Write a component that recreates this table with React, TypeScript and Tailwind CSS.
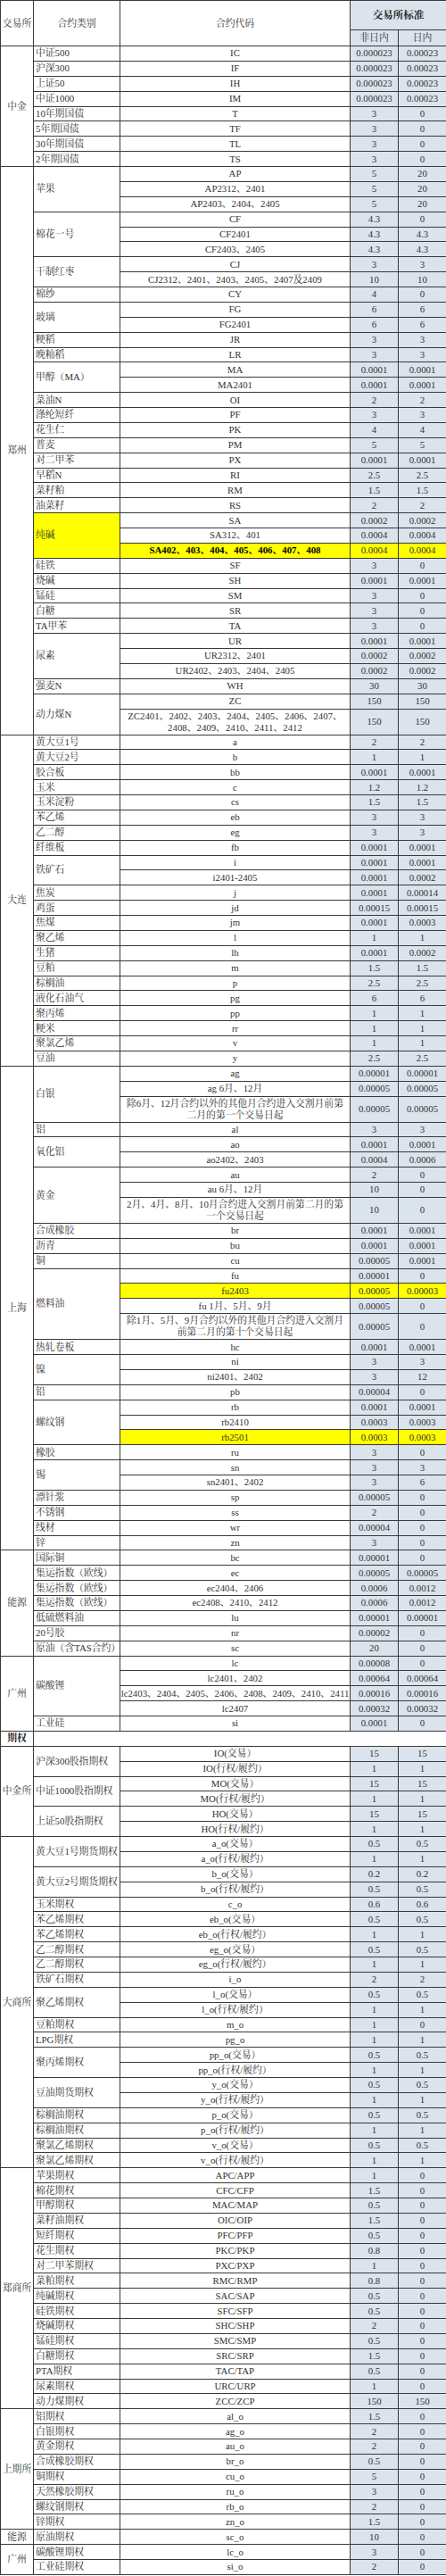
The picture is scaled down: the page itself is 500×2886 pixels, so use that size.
type Row = { code: string; a: string; b: string; hl?: boolean; bold?: boolean; tall?: boolean }
type Item = { name: string; hl?: boolean; rows: Row[] }
type Group = { ex: string; items: Item[] }

const r = (code: string, a: string, b: string, extra: Partial<Row> = {}): Row => ({ code, a, b, ...extra })
const s = (name: string, code: string, a: string, b: string): Item => ({ name, rows: [r(code, a, b)] })

const futures: Group[] = [
  {
    ex: "中金",
    items: [
      s("中证500", "IC", "0.000023", "0.00023"),
      s("沪深300", "IF", "0.000023", "0.00023"),
      s("上证50", "IH", "0.000023", "0.00023"),
      s("中证1000", "IM", "0.000023", "0.00023"),
      s("10年期国债", "T", "3", "0"),
      s("5年期国债", "TF", "3", "0"),
      s("30年期国债", "TL", "3", "0"),
      s("2年期国债", "TS", "3", "0"),
    ],
  },
  {
    ex: "郑州",
    items: [
      { name: "苹果", rows: [r("AP", "5", "20"), r("AP2312、2401", "5", "20"), r("AP2403、2404、2405", "5", "20")] },
      { name: "棉花一号", rows: [r("CF", "4.3", "0"), r("CF2401", "4.3", "4.3"), r("CF2403、2405", "4.3", "4.3")] },
      { name: "干制红枣", rows: [r("CJ", "3", "3"), r("CJ2312、2401、2403、2405、2407及2409", "10", "10")] },
      s("棉纱", "CY", "4", "0"),
      { name: "玻璃", rows: [r("FG", "6", "6"), r("FG2401", "6", "6")] },
      s("粳稻", "JR", "3", "3"),
      s("晚籼稻", "LR", "3", "3"),
      { name: "甲醇（MA）", rows: [r("MA", "0.0001", "0.0001"), r("MA2401", "0.0001", "0.0001")] },
      s("菜油N", "OI", "2", "2"),
      s("涤纶短纤", "PF", "3", "3"),
      s("花生仁", "PK", "4", "4"),
      s("普麦", "PM", "5", "5"),
      s("对二甲苯", "PX", "0.0001", "0.0001"),
      s("早稻N", "RI", "2.5", "2.5"),
      s("菜籽粕", "RM", "1.5", "1.5"),
      s("油菜籽", "RS", "2", "2"),
      {
        name: "纯碱",
        hl: true,
        rows: [
          r("SA", "0.0002", "0.0002"),
          r("SA312、401", "0.0004", "0.0004"),
          r("SA402、403、404、405、406、407、408", "0.0004", "0.0004", { hl: true, bold: true }),
        ],
      },
      s("硅铁", "SF", "3", "0"),
      s("烧碱", "SH", "0.0001", "0.0001"),
      s("锰硅", "SM", "3", "0"),
      s("白糖", "SR", "3", "0"),
      s("TA甲苯", "TA", "3", "0"),
      {
        name: "尿素",
        rows: [r("UR", "0.0001", "0.0001"), r("UR2312、2401", "0.0002", "0.0002"), r("UR2402、2403、2404、2405", "0.0002", "0.0002")],
      },
      s("强麦N", "WH", "30", "30"),
      {
        name: "动力煤N",
        rows: [
          r("ZC", "150", "150"),
          r("ZC2401、2402、2403、2404、2405、2406、2407、\n2408、2409、2410、2411、2412", "150", "150", { tall: true }),
        ],
      },
    ],
  },
  {
    ex: "大连",
    items: [
      s("黄大豆1号", "a", "2", "2"),
      s("黄大豆2号", "b", "1", "1"),
      s("胶合板", "bb", "0.0001", "0.0001"),
      s("玉米", "c", "1.2", "1.2"),
      s("玉米淀粉", "cs", "1.5", "1.5"),
      s("苯乙烯", "eb", "3", "3"),
      s("乙二醇", "eg", "3", "3"),
      s("纤维板", "fb", "0.0001", "0.0001"),
      { name: "铁矿石", rows: [r("i", "0.0001", "0.0001"), r("i2401-2405", "0.0001", "0.0002")] },
      s("焦炭", "j", "0.0001", "0.00014"),
      s("鸡蛋", "jd", "0.00015", "0.00015"),
      s("焦煤", "jm", "0.0001", "0.0003"),
      s("聚乙烯", "l", "1", "1"),
      s("生猪", "lh", "0.0001", "0.0002"),
      s("豆粕", "m", "1.5", "1.5"),
      s("棕榈油", "p", "2.5", "2.5"),
      s("液化石油气", "pg", "6", "6"),
      s("聚丙烯", "pp", "1", "1"),
      s("粳米", "rr", "1", "1"),
      s("聚氯乙烯", "v", "1", "1"),
      s("豆油", "y", "2.5", "2.5"),
    ],
  },
  {
    ex: "上海",
    items: [
      {
        name: "白银",
        rows: [
          r("ag", "0.00001", "0.00001"),
          r("ag 6月、12月", "0.00005", "0.00005"),
          r("除6月、12月合约以外的其他月合约进入交割月前第\n二月的第一个交易日起", "0.00005", "0.00005", { tall: true }),
        ],
      },
      s("铝", "al", "3", "3"),
      { name: "氧化铝", rows: [r("ao", "0.0001", "0.0001"), r("ao2402、2403", "0.0004", "0.0006")] },
      {
        name: "黄金",
        rows: [
          r("au", "2", "0"),
          r("au 6月、12月", "10", "0"),
          r("2月、4月、8月、10月合约进入交割月前第二月的第\n一个交易日起", "10", "0", { tall: true }),
        ],
      },
      s("合成橡胶", "br", "0.0001", "0.0001"),
      s("沥青", "bu", "0.0001", "0.0001"),
      s("铜", "cu", "0.00005", "0.0001"),
      {
        name: "燃料油",
        rows: [
          r("fu", "0.00001", "0"),
          r("fu2403", "0.00005", "0.00003", { hl: true }),
          r("fu 1月、5月、9月", "0.00005", "0"),
          r("除1月、5月、9月合约以外的其他月合约进入交割月\n前第二月的第十个交易日起", "0.00005", "0", { tall: true }),
        ],
      },
      s("热轧卷板", "hc", "0.0001", "0.0001"),
      { name: "镍", rows: [r("ni", "3", "3"), r("ni2401、2402", "3", "12")] },
      s("铅", "pb", "0.00004", "0"),
      {
        name: "螺纹钢",
        rows: [r("rb", "0.0001", "0.0001"), r("rb2410", "0.0003", "0.0003"), r("rb2501", "0.0003", "0.0003", { hl: true })],
      },
      s("橡胶", "ru", "3", "0"),
      { name: "锡", rows: [r("sn", "3", "3"), r("sn2401、2402", "3", "6")] },
      s("漂针浆", "sp", "0.00005", "0"),
      s("不锈钢", "ss", "2", "0"),
      s("线材", "wr", "0.00004", "0"),
      s("锌", "zn", "3", "0"),
    ],
  },
  {
    ex: "能源",
    items: [
      s("国际铜", "bc", "0.00001", "0"),
      s("集运指数（欧线）", "ec", "0.00005", "0.00005"),
      s("集运指数（欧线）", "ec2404、2406", "0.0006", "0.0012"),
      s("集运指数（欧线）", "ec2408、2410、2412", "0.0006", "0.0012"),
      s("低硫燃料油", "lu", "0.00001", "0.00001"),
      s("20号胶", "nr", "0.00002", "0"),
      s("原油（含TAS合约）", "sc", "20", "0"),
    ],
  },
  {
    ex: "广州",
    items: [
      {
        name: "碳酸锂",
        rows: [
          r("lc", "0.00008", "0"),
          r("lc2401、2402", "0.00064", "0.00064"),
          r("lc2403、2404、2405、2406、2408、2409、2410、2411", "0.00016", "0.00016"),
          r("lc2407", "0.00032", "0.00032"),
        ],
      },
      s("工业硅", "si", "0.0001", "0"),
    ],
  },
]

const pair = (name: string, c: string, a1: string, b1: string, a2: string, b2: string): Item => ({
  name,
  rows: [r(`${c}(交易）`, a1, b1), r(`${c}(行权/履约）`, a2, b2)],
})

const options: Group[] = [
  {
    ex: "中金所",
    items: [
      pair("沪深300股指期权", "IO", "15", "15", "1", "1"),
      pair("中证1000股指期权", "MO", "15", "15", "1", "1"),
      pair("上证50股指期权", "HO", "15", "15", "1", "1"),
    ],
  },
  {
    ex: "大商所",
    items: [
      pair("黄大豆1号期货期权", "a_o", "0.5", "0.5", "1", "1"),
      pair("黄大豆2号期货期权", "b_o", "0.2", "0.2", "0.5", "0.5"),
      s("玉米期权", "c_o", "0.6", "0.6"),
      s("苯乙烯期权", "eb_o(交易）", "0.5", "0.5"),
      s("苯乙烯期权", "eb_o(行权/履约）", "1", "1"),
      s("乙二醇期权", "eg_o(交易）", "0.5", "0.5"),
      s("乙二醇期权", "eg_o(行权/履约）", "1", "1"),
      s("铁矿石期权", "i_o", "2", "2"),
      pair("聚乙烯期权", "l_o", "0.5", "0.5", "1", "1"),
      s("豆粕期权", "m_o", "1", "0"),
      s("LPG期权", "pg_o", "1", "1"),
      pair("聚丙烯期权", "pp_o", "0.5", "0.5", "1", "1"),
      pair("豆油期货期权", "y_o", "0.5", "0.5", "1", "1"),
      s("棕榈油期权", "p_o(交易）", "0.5", "0.5"),
      s("棕榈油期权", "p_o(行权/履约）", "1", "1"),
      s("聚氯乙烯期权", "v_o(交易）", "0.5", "0.5"),
      s("聚氯乙烯期权", "v_o(行权/履约）", "1", "1"),
    ],
  },
  {
    ex: "郑商所",
    items: [
      s("苹果期权", "APC/APP", "1", "0"),
      s("棉花期权", "CFC/CFP", "1.5", "0"),
      s("甲醇期权", "MAC/MAP", "0.5", "0"),
      s("菜籽油期权", "OIC/OIP", "1.5", "0"),
      s("短纤期权", "PFC/PFP", "0.5", "0"),
      s("花生期权", "PKC/PKP", "0.8", "0"),
      s("对二甲苯期权", "PXC/PXP", "1", "0"),
      s("菜粕期权", "RMC/RMP", "0.8", "0"),
      s("纯碱期权", "SAC/SAP", "0.5", "0"),
      s("硅铁期权", "SFC/SFP", "0.5", "0"),
      s("烧碱期权", "SHC/SHP", "2", "0"),
      s("锰硅期权", "SMC/SMP", "0.5", "0"),
      s("白糖期权", "SRC/SRP", "1.5", "0"),
      s("PTA期权", "TAC/TAP", "0.5", "0"),
      s("尿素期权", "URC/URP", "1", "0"),
      s("动力煤期权", "ZCC/ZCP", "150", "150"),
    ],
  },
  {
    ex: "上期所",
    items: [
      s("铝期权", "al_o", "1.5", "0"),
      s("白银期权", "ag_o", "2", "0"),
      s("黄金期权", "au_o", "2", "0"),
      s("合成橡胶期权", "br_o", "0.5", "0"),
      s("铜期权", "cu_o", "5", "0"),
      s("天然橡胶期权", "ru_o", "3", "0"),
      s("螺纹钢期权", "rb_o", "2", "0"),
      s("锌期权", "zn_o", "1.5", "0"),
    ],
  },
  { ex: "能源", items: [s("原油期权", "sc_o", "10", "0")] },
  { ex: "广州", items: [s("碳酸锂期权", "lc_o", "3", "0"), s("工业硅期权", "si_o", "2", "0")] },
]

const cell = "border border-[#3a3a3a] p-0 align-middle"

function rowsOf(groups: Group[], prefix: string) {
  return groups.flatMap((g, gi) => {
    const total = g.items.reduce((n, it) => n + it.rows.length, 0)
    return g.items.flatMap((it, ii) =>
      it.rows.map((row, ri) => {
        const firstInGroup = ii === 0 && ri === 0
        return (
          <tr key={`${prefix}-${gi}-${ii}-${ri}`} className={row.tall ? "h-[29px]" : "h-[16.89px]"}>
            {firstInGroup && (
              <td rowSpan={total} className={`${cell} text-center whitespace-nowrap`}>
                {g.ex}
              </td>
            )}
            {ri === 0 && (
              <td
                rowSpan={it.rows.length}
                className={`${cell} px-[2px] text-left whitespace-nowrap ${it.hl ? "bg-[#ffff00]" : ""}`}
              >
                {it.name}
              </td>
            )}
            <td className={`${cell} ${row.hl ? "bg-[#ffff00]" : ""} ${row.bold ? "font-bold text-black" : ""}`}>
              <div className="flex justify-center overflow-hidden whitespace-pre text-center">{row.code}</div>
            </td>
            <td className={`${cell} text-center ${row.hl ? "bg-[#ffff00]" : "bg-[#dbe3ed]"}`}>{row.a}</td>
            <td className={`${cell} text-center ${row.hl ? "bg-[#ffff00]" : "bg-[#dbe3ed]"}`}>{row.b}</td>
          </tr>
        )
      })
    )
  })
}

export default function App() {
  return (
    <div className="w-[500px] bg-white">
      <table className="w-[500px] table-fixed border-collapse font-['Liberation_Serif','Noto_Serif_CJK_SC','Noto_Sans_CJK_SC',serif] text-[10.8px] leading-[13px] text-[#333]">
        <colgroup>
          <col className="w-[37px]" />
          <col className="w-[97px]" />
          <col className="w-[258px]" />
          <col className="w-[54px]" />
          <col className="w-[54px]" />
        </colgroup>
        <thead>
          <tr className="h-[33px]">
            <th rowSpan={2} className={`${cell} text-center font-normal whitespace-nowrap`}>
              交易所
            </th>
            <th rowSpan={2} className={`${cell} text-center font-normal`}>
              合约类别
            </th>
            <th rowSpan={2} className={`${cell} text-center font-normal`}>
              合约代码
            </th>
            <th colSpan={2} className={`${cell} bg-[#dbe3ed] text-center text-[11.5px] font-bold text-[#222]`}>
              交易所标准
            </th>
          </tr>
          <tr className="h-[18px]">
            <th className={`${cell} bg-[#dbe3ed] text-center font-normal`}>非日内</th>
            <th className={`${cell} bg-[#dbe3ed] text-center font-normal`}>日内</th>
          </tr>
        </thead>
        <tbody>
          {rowsOf(futures, "f")}
          <tr className="h-[16.89px]">
            <td className={`${cell} text-center font-bold text-[#222]`}>期权</td>
            <td colSpan={4} className={cell} />
          </tr>
          {rowsOf(options, "o")}
        </tbody>
      </table>
    </div>
  )
}
